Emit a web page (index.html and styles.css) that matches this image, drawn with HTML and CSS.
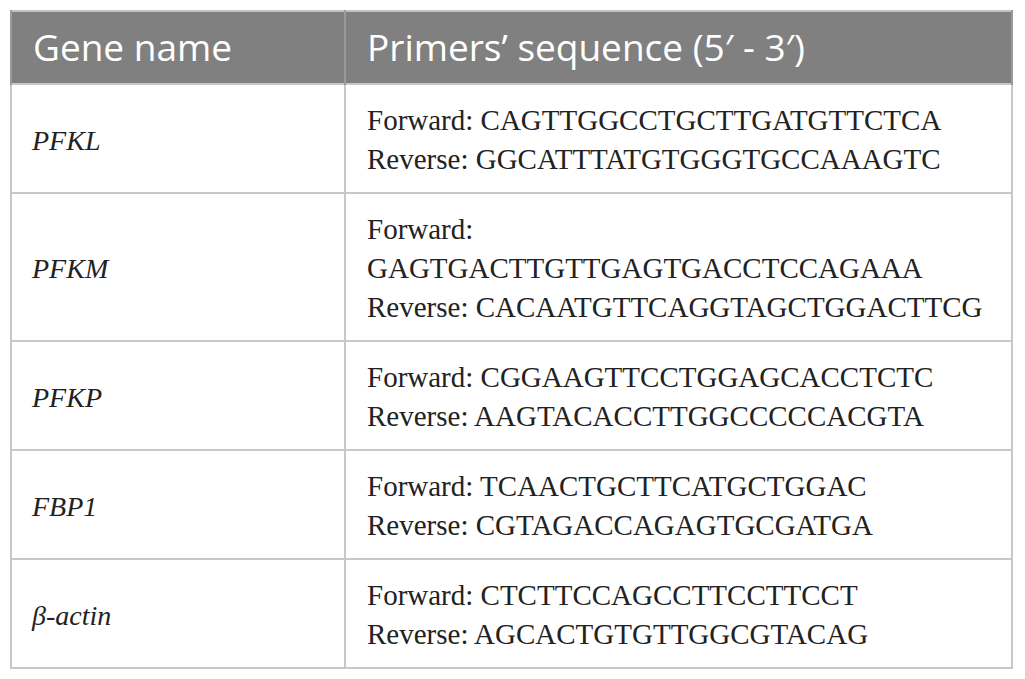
FILE: index.html
```html
<!DOCTYPE html>
<html>
<head>
<meta charset="utf-8">
<link rel="stylesheet" href="styles.css">
</head>
<body>
<table class="primers">
  <thead>
    <tr>
      <th class="col-gene">Gene name</th>
      <th class="col-seq">Primers’ sequence (5′ - 3′)</th>
    </tr>
  </thead>
  <tbody>
    <tr>
      <td class="gene">PFKL</td>
      <td class="seq">Forward: CAGTTGGCCTGCTTGATGTTCTCA<br>Reverse: GGCATTTATGTGGGTGCCAAAGTC</td>
    </tr>
    <tr>
      <td class="gene">PFKM</td>
      <td class="seq">Forward: GAGTGACTTGTTGAGTGACCTCCAGAAA<br>Reverse: CACAATGTTCAGGTAGCTGGACTTCG</td>
    </tr>
    <tr>
      <td class="gene">PFKP</td>
      <td class="seq">Forward: CGGAAGTTCCTGGAGCACCTCTC<br>Reverse: AAGTACACCTTGGCCCCCACGTA</td>
    </tr>
    <tr>
      <td class="gene">FBP1</td>
      <td class="seq">Forward: TCAACTGCTTCATGCTGGAC<br>Reverse: CGTAGACCAGAGTGCGATGA</td>
    </tr>
    <tr>
      <td class="gene">β-actin</td>
      <td class="seq">Forward: CTCTTCCAGCCTTCCTTCCT<br>Reverse: AGCACTGTGTTGGCGTACAG</td>
    </tr>
  </tbody>
</table>
</body>
</html>
```

FILE: styles.css
```css
html, body {
  margin: 0;
  padding: 0;
  background: #ffffff;
}

body {
  padding: 10px 12px 0 10px;
}

.primers {
  width: 1003px;
  border-collapse: collapse;
  table-layout: fixed;
  border: 2px solid #c3c3c3;
}

.primers th {
  background: #808080;
  color: #ffffff;
  font-family: "Open Sans", "Noto Sans", sans-serif;
  font-weight: 400;
  font-size: 37px;
  text-align: left;
  height: 73px;
  padding: 0 21px 2px;
  box-sizing: border-box;
  border-left: 2px solid #9a9a9a;
  border-right: 2px solid #9a9a9a;
  vertical-align: middle;
  line-height: 1;
}

.primers .col-gene {
  width: 334px;
}

.primers td {
  font-family: "Liberation Serif", "Times New Roman", serif;
  font-size: 29px;
  line-height: 39px;
  color: #222222;
  padding: 16px 21px 13px;
  border: 2px solid #c8c8c8;
  vertical-align: middle;
}

.primers td.gene {
  font-style: italic;
  font-size: 28px;
  padding-left: 20px;
}
```
